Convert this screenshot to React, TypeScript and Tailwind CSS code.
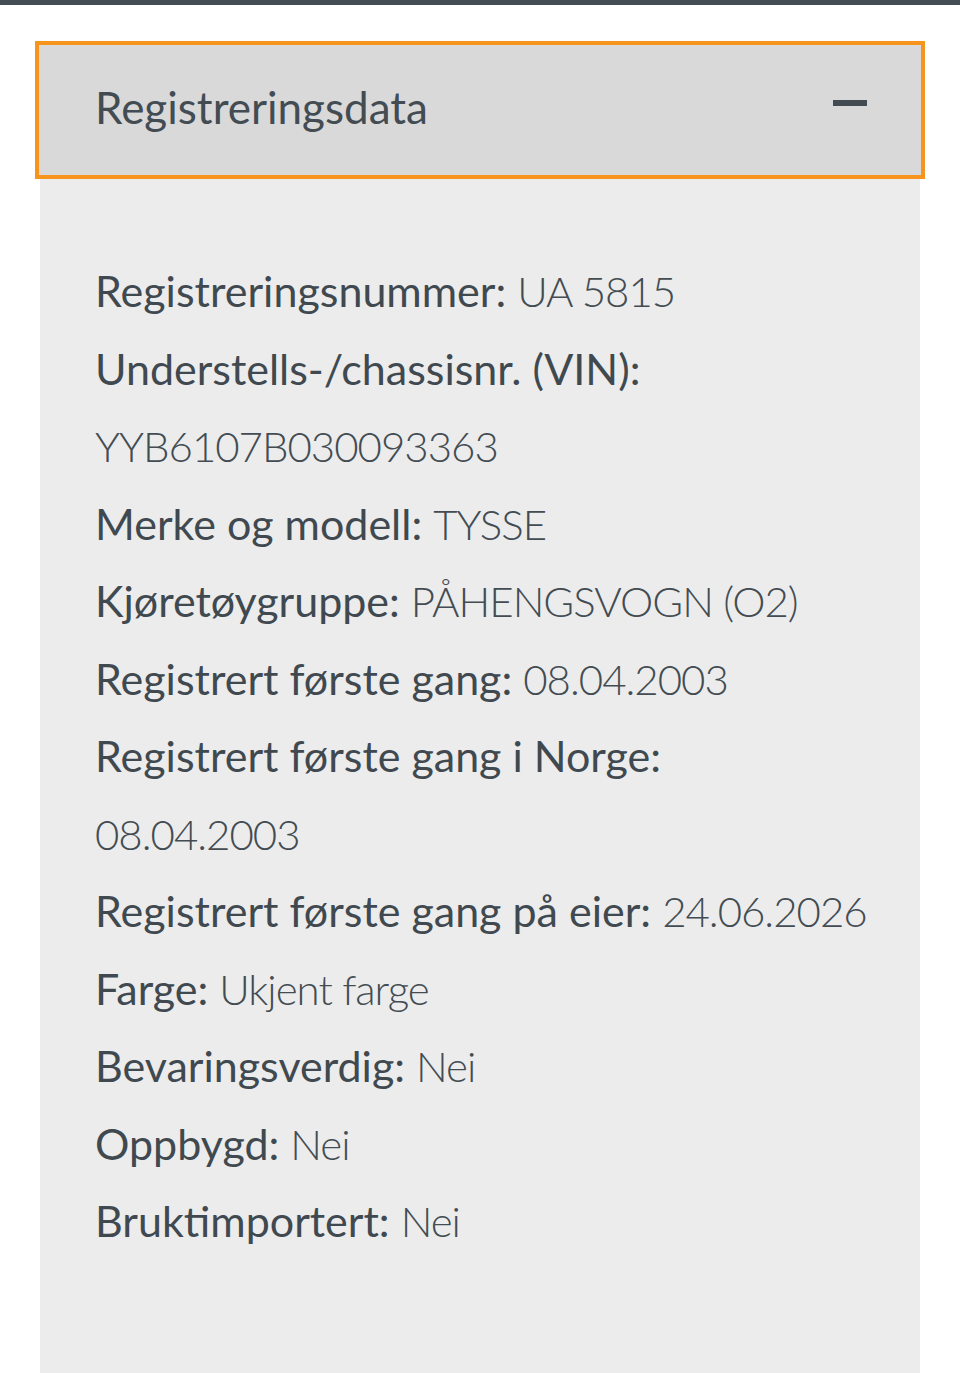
const rows: { label: string; value: string }[] = [
  { label: 'Registreringsnummer:', value: 'UA 5815' },
  { label: 'Understells-/chassisnr. (VIN):', value: 'YYB6107B030093363' },
  { label: 'Merke og modell:', value: 'TYSSE' },
  { label: 'Kjøretøygruppe:', value: 'PÅHENGSVOGN (O2)' },
  { label: 'Registrert første gang:', value: '08.04.2003' },
  { label: 'Registrert første gang i Norge:', value: '08.04.2003' },
  { label: 'Registrert første gang på eier:', value: '24.06.2026' },
  { label: 'Farge:', value: 'Ukjent farge' },
  { label: 'Bevaringsverdig:', value: 'Nei' },
  { label: 'Oppbygd:', value: 'Nei' },
  { label: 'Bruktimportert:', value: 'Nei' },
];

export default function App() {
  return (
    <div className="h-[1373px] overflow-hidden bg-white" style={{ fontFamily: 'Lato, "Open Sans", sans-serif' }}>
      <div className="h-[5px] bg-[#444d54]" />
      <div className="px-[40px] pt-[36px]">
        <div className="-mx-[5px] flex h-[138px] items-center justify-between border-4 border-[#f7941d] bg-[#d9d9d9] pl-[56px] pr-[54px]">
          <span className="mb-[6px] text-[44px] font-normal text-[#434c53]">Registreringsdata</span>
          <span className="mb-[14px] block h-[6px] w-[34px] bg-[#434c53]" />
        </div>
        <div className="min-h-[1194px] bg-[#ececec] pl-[55px] pr-[50px] pt-[73px] pb-[100px] text-[43px] leading-[77.5px] text-[#3f494f]">
          {rows.map((r) => (
            <p key={r.label}>
              <span className="font-normal">{r.label}</span>{' '}
              <span className="text-[42px] leading-none font-light tracking-[-1px] text-[#434c53]">{r.value}</span>
            </p>
          ))}
        </div>
      </div>
    </div>
  );
}
